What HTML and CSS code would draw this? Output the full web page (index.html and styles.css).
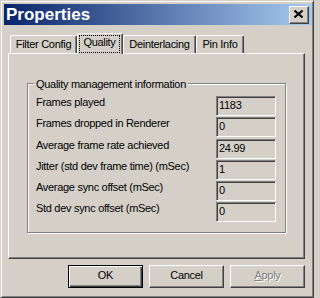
FILE: index.html
```html
<!DOCTYPE html>
<html>
<head>
<meta charset="utf-8">
<link rel="stylesheet" href="styles.css">
</head>
<body>
<div class="window">
  <div class="titlebar">
    <span class="title">Properties</span>
    <span class="close"><svg width="9" height="8" viewBox="0 0 9 8"><path d="M0.5 0.5 L8.5 7.5 M8.5 0.5 L0.5 7.5" stroke="#000" stroke-width="2" fill="none"/></svg></span>
  </div>
  <div class="content">
    <div class="tabs">
      <div class="tab t1">Filter Config</div>
      <div class="tab sel"><span class="focus">Quality</span></div>
      <div class="tab t3">Deinterlacing</div>
      <div class="tab t4">Pin Info</div>
    </div>
    <div class="panel">
      <div class="group">
        <div class="legend">Quality management information</div>
        <div class="rows">
          <div class="label">Frames played</div><div class="val">1183</div>
          <div class="label">Frames dropped in Renderer</div><div class="val">0</div>
          <div class="label">Average frame rate achieved</div><div class="val">24.99</div>
          <div class="label">Jitter (std dev frame time) (mSec)</div><div class="val">1</div>
          <div class="label">Average sync offset (mSec)</div><div class="val">0</div>
          <div class="label">Std dev sync offset (mSec)</div><div class="val">0</div>
        </div>
      </div>
    </div>
    <div class="buttons">
      <div class="btn default">OK</div>
      <div class="btn">Cancel</div>
      <div class="btn disabled"><span class="ul">A</span>pply</div>
    </div>
  </div>
</div>
</body>
</html>
```

FILE: styles.css
```css
html, body {
  margin: 0;
  padding: 0;
  background: #D4D0C8;
}
body {
  font-family: "Liberation Sans", Arial, sans-serif;
  font-size: 11px;
  line-height: 13px;
  letter-spacing: -0.3px;
  color: #000;
}
.window {
  width: 314px;
  height: 298px;
  box-sizing: border-box;
  border: 1px solid;
  border-color: #D4D0C8 #404040 #404040 #D4D0C8;
  box-shadow: inset 1px 1px #fff, inset -1px -1px #808080;
  padding: 3px 1px 3px 3px;
  display: flex;
  flex-direction: column;
}
.titlebar {
  height: 21px;
  flex: none;
  display: flex;
  align-items: center;
  justify-content: space-between;
  background: linear-gradient(to right, #0A246A, #A6CAF0);
  padding: 0 3px 0 2px;
}
.title {
  color: #fff;
  font-weight: bold;
  font-size: 17px;
  letter-spacing: 0;
  line-height: 21px;
}
.close {
  width: 20px;
  height: 18px;
  box-sizing: border-box;
  background: #D4D0C8;
  border: 1px solid;
  border-color: #fff #404040 #404040 #fff;
  box-shadow: inset -1px -1px #808080;
  display: flex;
  align-items: center;
  justify-content: center;
  padding: 0 1px 1px 0;
}
.close svg { display: block; }
.content {
  flex: 1;
  display: flex;
  flex-direction: column;
  padding: 8px 7px 6px 4px;
}
.tabs {
  height: 20px;
  flex: none;
  display: flex;
  align-items: flex-end;
  padding-left: 2px;
  position: relative;
  z-index: 1;
}
.tab {
  height: 18px;
  box-sizing: border-box;
  border-top: 1px solid #fff;
  border-left: 1px solid #fff;
  border-right: 1px solid #404040;
  box-shadow: inset -1px 0 #808080;
  border-radius: 2px 2px 0 0;
  padding-top: 2px;
  text-align: center;
  white-space: nowrap;
}
.t1 { width: 67px; }
.t3 { width: 73px; }
.t4 { width: 48px; }
.tab.sel {
  width: 46px;
  height: 21px;
  margin-bottom: -1px;
  background: #D4D0C8;
  padding: 1px 0 0 1px;
}
.focus {
  display: block;
  width: 41px;
  height: 18px;
  box-sizing: border-box;
  border: 1px dotted #000;
  text-align: center;
}
.panel {
  flex: 1;
  border: 1px solid;
  border-color: #fff #404040 #404040 #fff;
  box-shadow: inset -1px -1px #808080;
  padding: 29px 0 0 18px;
}
.group {
  position: relative;
  width: 259px;
  height: 150px;
  box-sizing: border-box;
  border: 1px solid #808080;
  box-shadow: inset 1px 1px #fff, 1px 1px #fff;
}
.legend {
  position: absolute;
  left: 6px;
  top: -6px;
  padding: 0 2px;
  background: #D4D0C8;
  white-space: nowrap;
}
.rows {
  display: grid;
  grid-template-columns: 1fr 60px;
  grid-template-rows: 21px 22px 21px 21px 21px 20px;
  padding: 12px 9px 0 8px;
}
.label {
  white-space: nowrap;
}
.val {
  height: 20px;
  box-sizing: border-box;
  border: 1px solid;
  border-color: #808080 #fff #fff #808080;
  box-shadow: inset 1px 1px #404040, inset -1px -1px #D4D0C8;
  padding: 2px 2px 0 2px;
}
.buttons {
  display: flex;
  justify-content: flex-end;
  gap: 6px;
  margin-top: 6px;
  flex: none;
}
.btn {
  width: 75px;
  height: 23px;
  box-sizing: border-box;
  border: 1px solid;
  border-color: #fff #404040 #404040 #fff;
  box-shadow: inset -1px -1px #808080;
  display: flex;
  align-items: center;
  justify-content: center;
  padding-bottom: 2px;
}
.btn.default {
  border-color: #000;
  box-shadow: inset 1px 1px #fff, inset -1px -1px #404040, inset -2px -2px #808080;
}
.btn.disabled {
  color: #808080;
  text-shadow: 1px 1px #fff;
}
.ul { text-decoration: underline; }
```
